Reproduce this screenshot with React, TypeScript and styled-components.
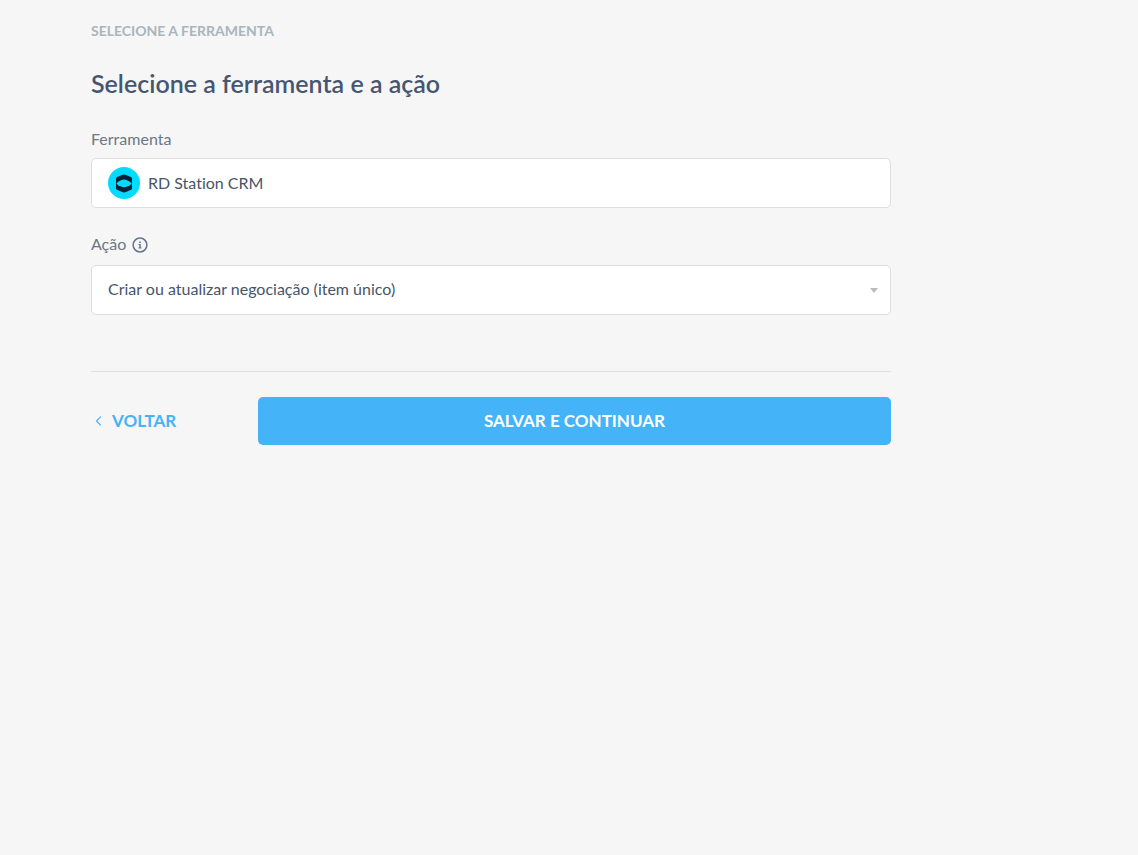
import React from "react";
import styled, { createGlobalStyle } from "styled-components";

const GlobalStyle = createGlobalStyle`
  *, *::before, *::after { box-sizing: border-box; }
  body {
    margin: 0;
    background: #f6f6f6;
    color: #475569;
    font-family: Lato, "Liberation Sans", sans-serif;
    font-size: 16px;
    font-variant-ligatures: none;
    line-height: 24px;
  }
`;

const Page = styled.main`
  max-width: 982px;
  padding: 23px 91px 48px;
`;

const StepName = styled.p`
  margin: 0;
  color: #a9b5bd;
  font-size: 14px;
  font-weight: 700;
  line-height: 16px;
`;

const Title = styled.h1`
  margin: 28px 0;
  color: #475670;
  font-size: 25px;
  font-weight: 600;
  line-height: 32px;
`;

const Form = styled.form`
  display: flex;
  flex-direction: column;
  width: 100%;
`;

const Field = styled.div<{ $gap: number }>`
  display: flex;
  flex-direction: column;
  gap: ${({ $gap }) => $gap}px;
  margin-bottom: 24px;
`;

const LabelRow = styled.div`
  display: flex;
  align-items: center;
  gap: 6px;
  color: #6b7885;
`;

const InfoButton = styled.button`
  display: flex;
  margin-top: 2px;
  padding: 0;
  border: 0;
  background: none;
  color: #65748a;
  cursor: pointer;
`;

const ControlBox = styled.div`
  position: relative;
  display: flex;
  align-items: center;
  gap: 8px;
  height: 50px;
  padding-left: 16px;
  border: 1px solid #dcdfe2;
  border-radius: 5px;
  background: #fff;
`;

const ToolInput = styled.input`
  flex: 1;
  min-width: 0;
  height: 100%;
  padding: 0 0 2px;
  border: 0;
  outline: 0;
  background: transparent;
  color: #475569;
  font: inherit;
  font-variant-ligatures: none;
`;

const ActionSelect = styled.select`
  flex: 1;
  min-width: 0;
  height: 100%;
  padding: 0 32px 2px 0;
  border: 0;
  outline: 0;
  appearance: none;
  background: transparent;
  color: #475569;
  font: inherit;
  font-variant-ligatures: none;
`;

const Caret = styled.svg`
  position: absolute;
  right: 11px;
  top: 22px;
  pointer-events: none;
`;

const Divider = styled.hr`
  width: 100%;
  height: 1px;
  margin: 32px 0 25px;
  border: 0;
  background: #dcdfe1;
`;

const Actions = styled.div`
  display: grid;
  grid-template-columns: 151px 1fr;
  column-gap: 16px;
  align-items: center;
`;

const Button = styled.button`
  height: 48px;
  border: 0;
  border-radius: 5px;
  font: inherit;
  font-size: 17px;
  font-weight: 700;
  cursor: pointer;
`;

const BackButton = styled(Button)`
  display: flex;
  align-items: center;
  gap: 10px;
  padding: 0 0 0 4px;
  background: none;
  color: #44b3f7;
`;

const SaveButton = styled(Button)`
  background: #44b3f7;
  color: #fff;
`;

const RdLogo = () => (
  <svg width="32" height="32" viewBox="0 0 32 32" aria-hidden="true">
    <circle cx="16" cy="16" r="16" fill="#00dbff" />
    <path
      d="M8 12C8 11 8.4 10.4 9.1 10.1L14 7.9Q16 7.1 18 7.9L22.9 10.1C23.6 10.4 24 11 24 12V21C24 22 23.6 22.5 22.9 22.8L18 25Q16 25.8 14 25L9.1 22.8C8.4 22.5 8 22 8 21Z"
      fill="#04233a"
    />
    <path
      d="M8.4 16.4Q9.6 14.6 13 13.2Q16 12 19 13.2Q22.4 14.6 23.6 16.4Q22.4 18.2 19 19.6Q16 20.8 13 19.6Q9.6 18.2 8.4 16.4Z"
      fill="#00dbff"
    />
  </svg>
);

const InfoIcon = () => (
  <svg width="16" height="16" viewBox="0 0 16 16" aria-hidden="true">
    <circle cx="8" cy="8" r="6.9" fill="none" stroke="currentColor" strokeWidth="1.5" />
    <path d="M7.2 4.5H8.8V6H7.2ZM6.5 7H8.8V10.6H9.6V11.5H6.5V10.6H7.3V7.9H6.5Z" fill="currentColor" />
  </svg>
);

export default function App() {
  return (
    <>
      <GlobalStyle />
      <Page>
        <StepName>SELECIONE A FERRAMENTA</StepName>
        <Title>Selecione a ferramenta e a ação</Title>
        <Form onSubmit={(event) => event.preventDefault()}>
          <Field $gap={7}>
            <LabelRow>
              <label htmlFor="tool">Ferramenta</label>
            </LabelRow>
            <ControlBox>
              <RdLogo />
              <ToolInput id="tool" defaultValue="RD Station CRM" readOnly />
            </ControlBox>
          </Field>
          <Field $gap={9}>
            <LabelRow>
              <label htmlFor="action">Ação</label>
              <InfoButton type="button" aria-label="Informações sobre a ação">
                <InfoIcon />
              </InfoButton>
            </LabelRow>
            <ControlBox>
              <ActionSelect id="action" defaultValue="upsert">
                <option value="upsert">Criar ou atualizar negociação (item único)</option>
              </ActionSelect>
              <Caret width="10" height="5" viewBox="0 0 10 5" aria-hidden="true">
                <path d="M1 0H9L5 5Z" fill="#b9bcbf" />
              </Caret>
            </ControlBox>
          </Field>
          <Divider />
          <Actions>
            <BackButton type="button">
              <svg width="7" height="10" viewBox="0 0 7 10" aria-hidden="true">
                <path d="M5.8 .7L1.5 5L5.8 9.3" fill="none" stroke="currentColor" strokeWidth="1.2" />
              </svg>
              VOLTAR
            </BackButton>
            <SaveButton type="submit">SALVAR E CONTINUAR</SaveButton>
          </Actions>
        </Form>
      </Page>
    </>
  );
}
